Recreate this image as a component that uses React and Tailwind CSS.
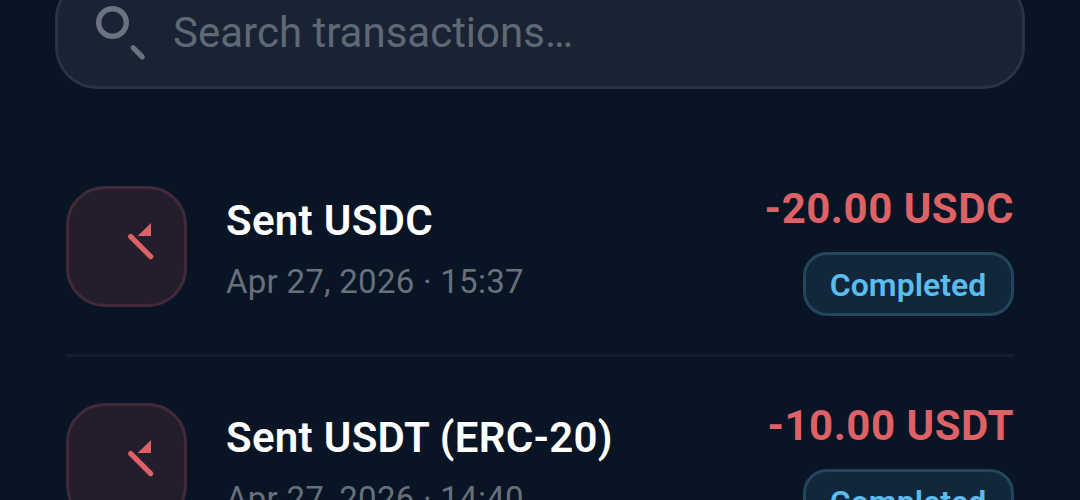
const transactions = [
  {
    id: 1,
    title: 'Sent USDC',
    date: 'Apr 27, 2026 · 15:37',
    amount: '-20.00 USDC',
    status: 'Completed',
  },
  {
    id: 2,
    title: 'Sent USDT (ERC-20)',
    date: 'Apr 27, 2026 · 14:40',
    amount: '-10.00 USDT',
    status: 'Completed',
  },
];

function SearchIcon() {
  return (
    <svg width="54" height="60" viewBox="0 0 54 60" fill="none" className="shrink-0">
      <circle cx="19.5" cy="19.5" r="13.8" stroke="#6b7280" strokeWidth="5.4" />
      <path d="M40.2 44.7l9 9.2" stroke="#6b7280" strokeWidth="5.2" strokeLinecap="round" />
    </svg>
  );
}

function SentIcon() {
  return (
    <svg width="120" height="120" viewBox="0 0 120 120" fill="none" className="-m-[3px] shrink-0">
      <path d="M64.7 50.6l20 20" stroke="#de6166" strokeWidth="5.2" strokeLinecap="round" />
      <path d="M85 37v13H71.6z" fill="#de6166" />
    </svg>
  );
}

function SearchBar() {
  return (
    <div className="-mt-[23px] mx-[55px] flex h-28 items-center rounded-[42px] border-[3px] border-[#283343] bg-[#192333] pl-[35px]">
      <SearchIcon />
      <span className="ml-[26px] text-[42px] leading-none text-[#5f6875]">
        Search transactions…
      </span>
    </div>
  );
}

function TransactionRow({ transaction }) {
  return (
    <div className="flex h-[217px] shrink-0 items-start justify-between border-b-[3px] border-[#131e2e] pt-[46px]">
      <div className="flex">
        <div className="h-[121px] w-[121px] overflow-hidden rounded-[39px] border-[3px] border-[#442a39] bg-[#241d2b]">
          <SentIcon />
        </div>
        <div className="ml-[39px] flex flex-col pt-3">
          <span className="text-[42px] leading-[46px] font-semibold tracking-[0.3px] text-white">
            {transaction.title}
          </span>
          <span className="mt-4 text-[33px] leading-[44px] tracking-[0.26px] text-[#68707c]">
            {transaction.date}
          </span>
        </div>
      </div>
      <div className="flex flex-col items-end">
        <span className="text-[42px] leading-[46px] font-bold tracking-[0.5px] text-[#de6166]">
          {transaction.amount}
        </span>
        <span className="mt-5 flex h-16 w-[211px] items-center justify-center rounded-[24px] border-[3px] border-[#24455e] bg-[#12273a] pt-0.5 pr-px text-[32px] leading-none font-semibold text-[#5bbcf0]">
          {transaction.status}
        </span>
      </div>
    </div>
  );
}

export default function App() {
  return (
    <div className="h-[500px] w-[1080px] overflow-hidden bg-[#091425] font-[Roboto,sans-serif]">
      <div className="flow-root">
        <SearchBar />
        <div className="mt-[51px] flex flex-col px-[66px]">
          {transactions.map((transaction) => (
            <TransactionRow key={transaction.id} transaction={transaction} />
          ))}
        </div>
      </div>
    </div>
  );
}
